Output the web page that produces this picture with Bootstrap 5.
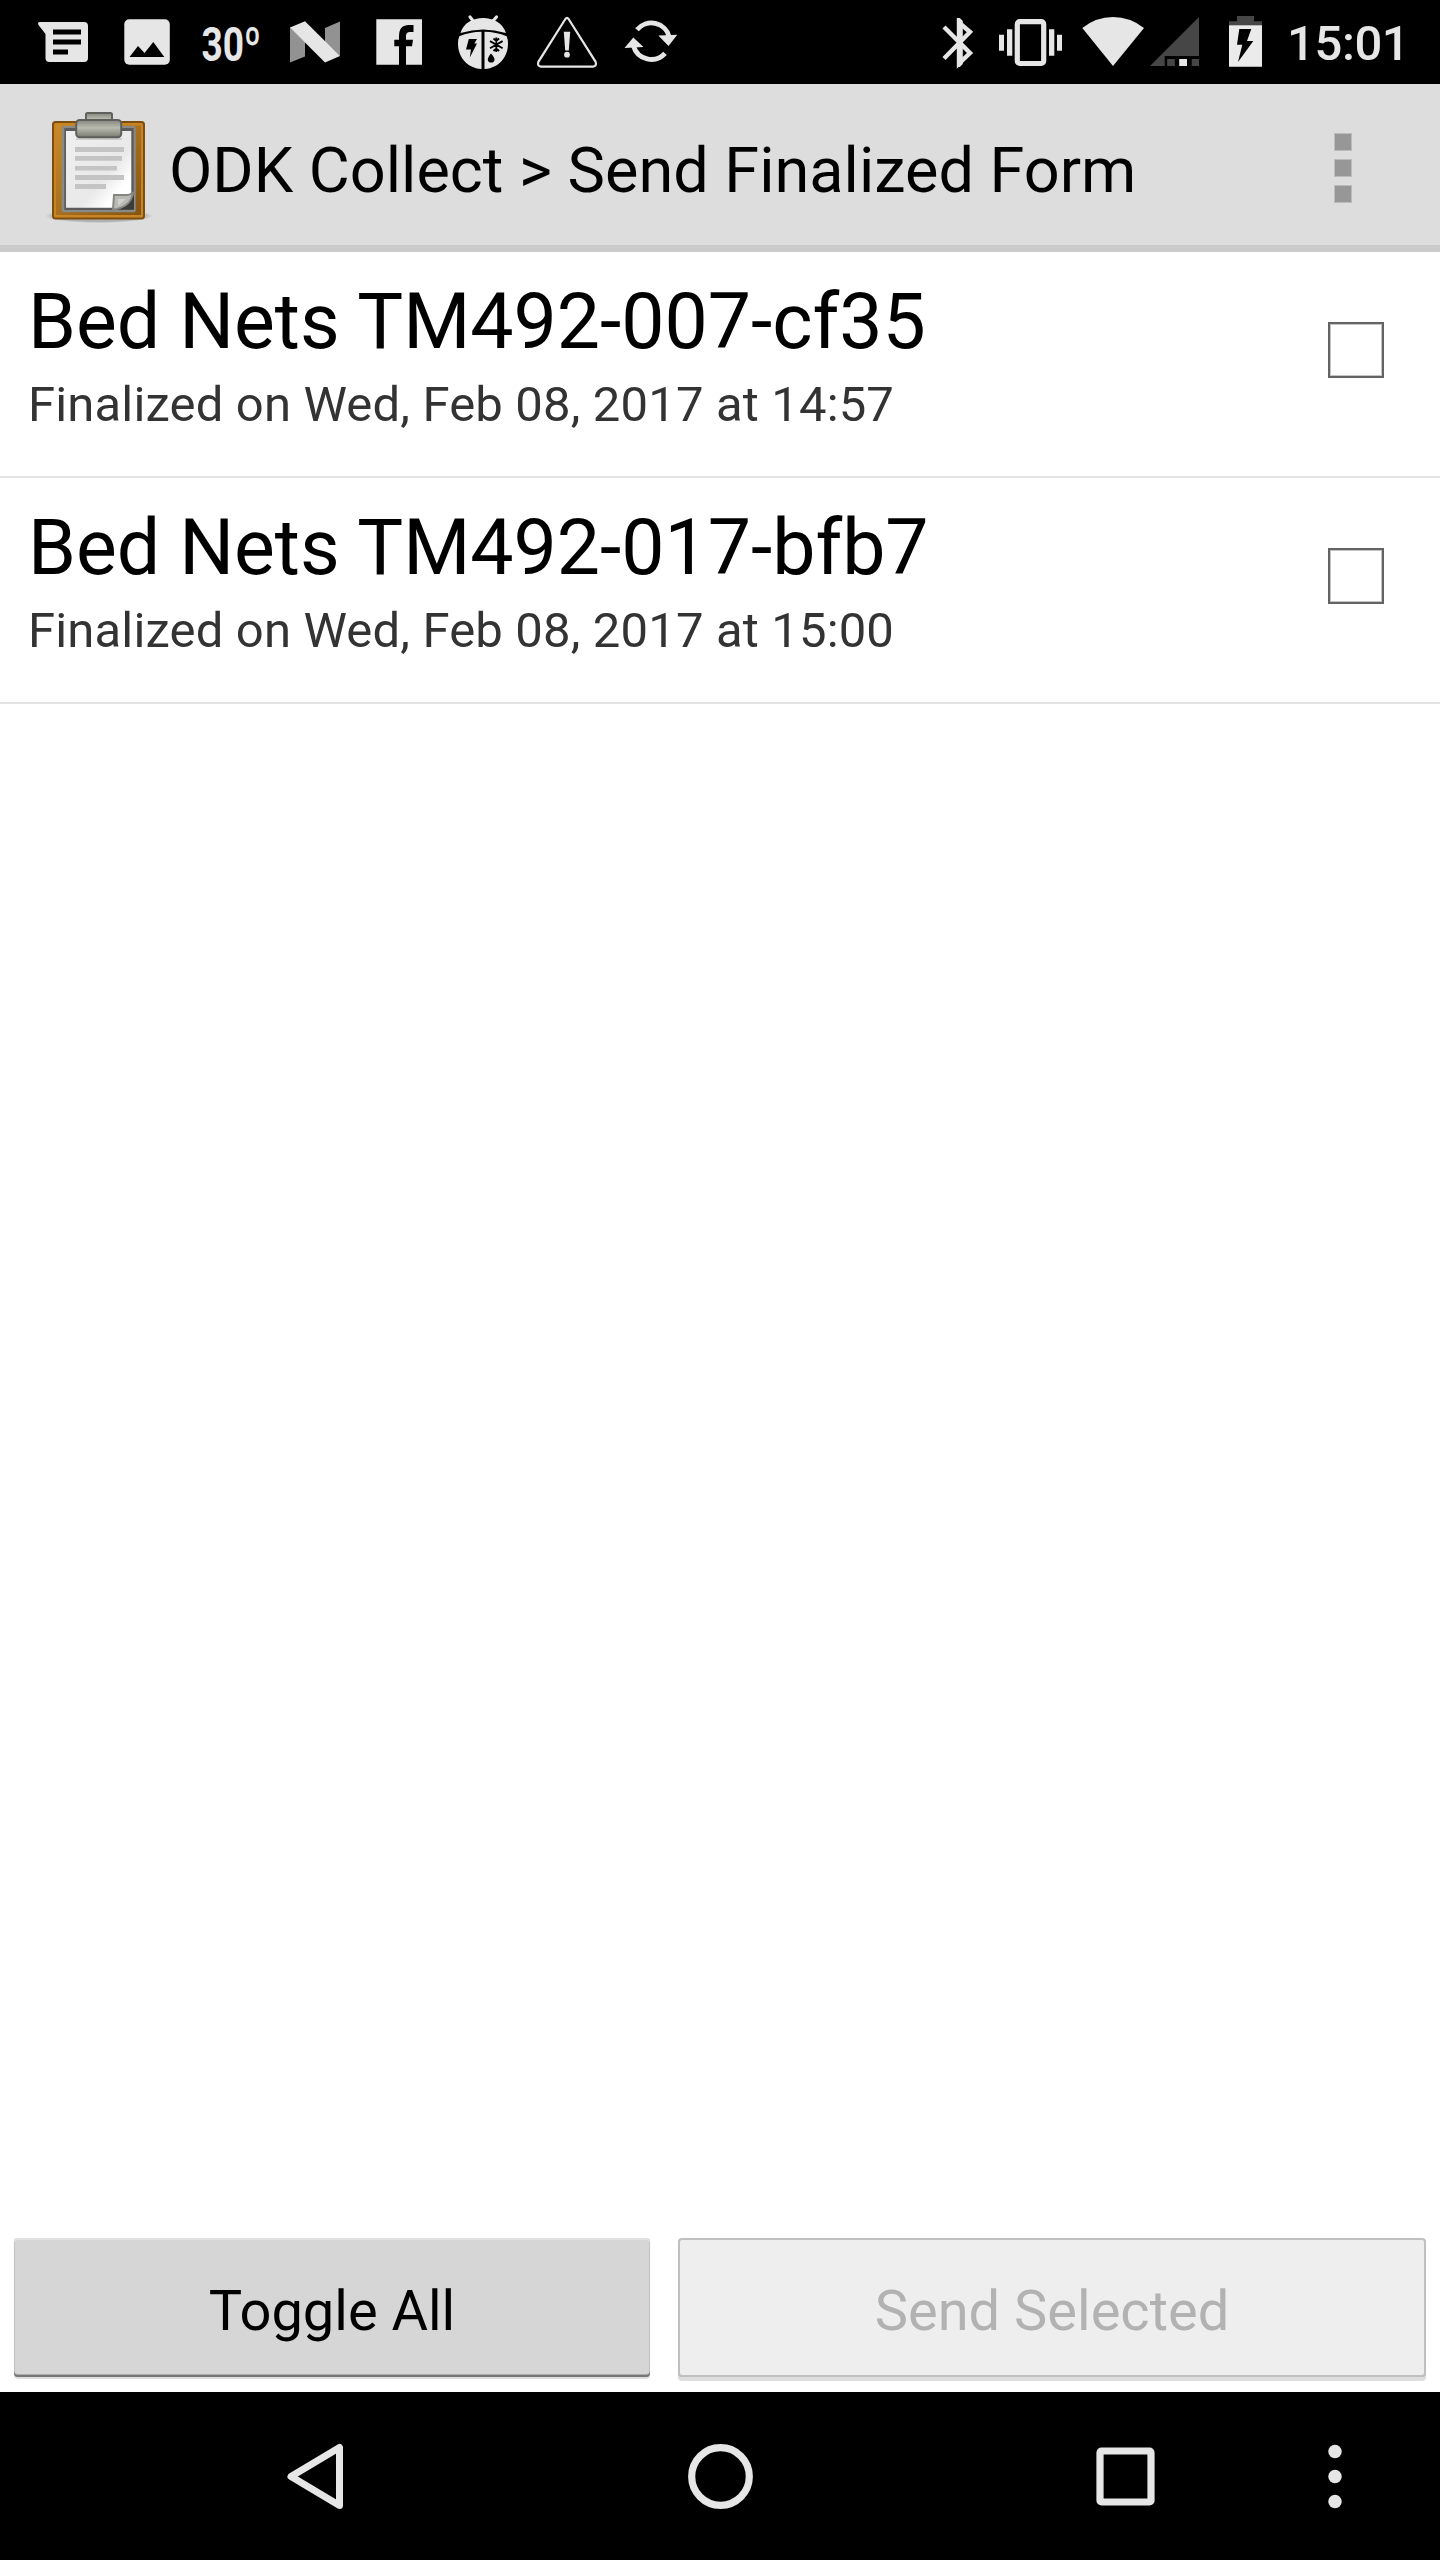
<!DOCTYPE html>
<html lang="en">
<head>
<meta charset="utf-8">
<meta name="viewport" content="width=device-width, initial-scale=1">
<title>ODK Collect</title>
<link href="https://cdn.jsdelivr.net/npm/bootstrap@5.3.0/dist/css/bootstrap.min.css" rel="stylesheet">
<style>
  body { font-family: Roboto, "Liberation Sans", sans-serif; color: #000; background: #fff; overflow: hidden; }
  svg { display: block; flex: none; overflow: visible; }
  .phone { width: 1440px; height: 2560px; }
  .status-bar { height: 84px; background: #000; color: #e6e6e6; padding-left: 24px; }
  .clock { font-size: 49px; font-weight: 500; line-height: 84px; padding-top: 2px; height: 84px; width: 153px; margin-left: -4px; letter-spacing: -.4px; }
  .app-bar { height: 168px; background: #ddd; border-bottom: 7px solid #cbcbcb; padding-left: 40px; padding-right: 88px; }
  .app-title { font-size: 63px; line-height: 74px; margin-left: 19px; padding-top: 12px; }
  .overflow-dots { gap: 8.6px; padding-top: 7px; }
  .overflow-dots i { width: 18px; height: 17.6px; background: #979797; border: .5px solid #bbb; }
  .list-group-flush > .form-row { height: 226px; padding: 20px 56px 0 28px; border: 0 solid #e3e3e3; border-bottom-width: 2px !important; border-radius: 0; color: #000; }
  .form-name { font-size: 77px; line-height: 90px; margin-top: 5px; letter-spacing: -.04px; }
  .form-date { font-size: 49px; line-height: 58px; color: #333; margin-top: 9px; letter-spacing: .16px; }
  .form-check-input.pick { width: 56px; height: 56px; margin: 50px 0 0; border: 2px solid #636363; border-radius: 0; box-shadow: inset 0 0 0 1px #c4c4c4; float: none; }
  .action-row { height: 154px; padding: 0 14px 15px; gap: 28px; }
  .action-row .btn { font-size: 56px; line-height: 66px; height: 139px; border-radius: 4px; padding: 7px 0 0; color: #000; border: 0; }
  .btn-toggle { width: 636px; background: #d6d6d6 !important; box-shadow: inset 0 2px 0 #e2e2e2, inset 0 -2px 0 #777, inset 0 -3px 0 #aaa, inset 1px 0 0 #c2c2c2, inset -1px 0 0 #c2c2c2, 0 2px 1px #ddd; }
  .action-row .btn-send { width: 748px; background: #eee; color: #b2b2b2; opacity: 1; box-shadow: inset 0 0 0 2px #c0c0c0, inset 0 -2px 0 #aeaeae, 0 4px 0 #dedede; }
  .nav-bar { height: 168px; background: #000; padding-left: 255px; }
</style>
</head>
<body>
<div class="phone d-flex flex-column">

  <header class="status-bar d-flex align-items-start flex-shrink-0">
    <svg width="81" height="84" viewBox="24 0 81 84"><path fill="#e6e6e6" d="M40 22H84Q88 22 88 26V58Q88 62 84 62H49.500Q45.500 62 45.500 58V34L38.500 25Q37 22 40 22Z"/><path fill="#000" d="M53 29.500h28v5H53zM53 39.500h28v5H53zM53 49.500h15v5H53z"/></svg>
    <svg width="85" height="84" viewBox="105 0 85 84"><rect x="124.300" y="19.200" width="45.500" height="45.500" rx="5" fill="#e6e6e6"/><path d="M129.500 57 138 46l6.500 7L153.300 42 164.300 57z"/></svg>
    <svg width="85" height="84" viewBox="190 0 85 84"><text x="201.500" y="61" font-size="48" font-weight="700" fill="#e6e6e6" textLength="59.500" lengthAdjust="spacingAndGlyphs">30º</text></svg>
    <svg width="80" height="84" viewBox="275 0 80 84"><path fill="#929292" d="M290 27 305 42V56.500L290 62.500zM325 28 340 21.500V56L325 42z"/><path fill="#e6e6e6" d="M290 27.500 305 21.300 340 56 325 62.600z"/></svg>
    <svg width="85" height="84" viewBox="355 0 85 84"><path fill="#e6e6e6" d="M376.300 19.200H422V64.800H376.300z"/><path d="M399 65V46.300H394.300V39.700H399V36Q399 25 409 25H413.500V32H410Q406 32 406 36V39.700H413L412 46.300H406V65z"/></svg>
    <svg width="85" height="84" viewBox="440 0 85 84"><path d="M470 17 474 22M496.500 17 492 22" stroke="#e6e6e6" stroke-width="3.200" stroke-linecap="round"/><path fill="#e6e6e6" d="M460.500 33C466 13 500 13 506 33Q483 26 460.500 33zM481.500 31.800V69C466 68 458 56 458 43.500Q458 39.500 459.300 36.300 470 32 481.500 31.800zM484.500 31.800V69C500 68 508 56 508 43.500Q508 39.500 506.700 36.300 496 32 484.500 31.800z"/><path d="M468.800 39H477L474.300 43.500H477L469.800 57.500 471 49.500H466z"/><path d="M496.300 37.500v14.400M490 41.100l12.600 7.200M502.600 41.100 490 48.300M493.500 38.500l2.800 2.500 2.800-2.500M493.500 51l2.800-2.500 2.800 2.500" stroke="#000" stroke-width="1.800" fill="none"/><path d="M491 53.500Q494.500 57.500 494.500 59.200A3.300 3.300 0 0 1 487.800 59.200Q487.800 57.500 491 53.500z"/></svg>
    <svg width="85" height="84" viewBox="525 0 85 84"><path d="M565.400 19Q567 16.800 568.600 19L595.600 61.800Q597 66.400 593 66.600H541Q537 66.400 538.400 61.800z" fill="none" stroke="#e6e6e6" stroke-width="2.200"/><path fill="#e6e6e6" d="M563.800 31.800h6.400l-1.400 18.800h-3.600z"/><circle cx="567" cy="54.700" r="2.900" fill="#e6e6e6"/></svg>
    <svg width="80" height="84" viewBox="610 0 80 84"><path d="M637 29.800A18.500 18.500 0 0 1 669.300 37M665 53.300A18.500 18.500 0 0 1 633.500 46" fill="none" stroke="#e6e6e6" stroke-width="4.800"/><path fill="#e6e6e6" d="M658.300 35.500 677.300 34.800 668.500 46zM624.500 48 633.300 37.500 643.500 47z"/></svg>

    <svg class="ms-auto" width="55" height="84" viewBox="930 0 55 84"><path d="M944 27 970 53 959 63.500V22.500L970 32 944 58.500" fill="none" stroke="#e6e6e6" stroke-width="4.400"/><path fill="#e6e6e6" d="M957 18h2.800l3 3v43l-3 3H957z"/></svg>
    <svg width="85" height="84" viewBox="985 0 85 84"><rect x="1017.300" y="21.700" width="26.400" height="41.800" rx="2.500" fill="none" stroke="#e6e6e6" stroke-width="5.200"/><path fill="#e6e6e6" d="M1007 29.300h5.300v26.400h-5.300zM999 34.700h5v16h-5zM1049 29.300h5.300v26.400h-5.300zM1057 34.700h5v16h-5z"/></svg>
    <svg width="80" height="84" viewBox="1070 0 80 84"><path fill="#e6e6e6" d="M1082.300 28Q1096 17 1113 17T1144 28L1113 66z"/></svg>
    <svg width="60" height="84" viewBox="1150 0 60 84"><path fill="#464646" d="M1150 66 1199 17V56H1164.700V66zM1167.200 59h7.600v7h-7.600zM1191.700 59h7.300v7h-7.300z"/><path fill="#e6e6e6" d="M1179.200 59h7.800v7h-7.800z"/></svg>
    <svg width="81" height="84" viewBox="1210 0 81 84"><path fill="#464646" d="M1237 16h17v5.300h8v4.200h-33v-4.200h8z"/><path fill="#ebebeb" d="M1229 25.300h33v41.500h-33z"/><path d="M1239.300 29H1251.300L1247 41H1253.300L1238 62 1242.300 44.700H1237z"/></svg>
    <span class="clock flex-shrink-0">15:01</span>
  </header>

  <nav class="app-bar d-flex align-items-center flex-shrink-0">
    <svg width="110" height="130" viewBox="40 100 110 130">
      <defs>
        <linearGradient id="board" x1="0" y1="0" x2="1" y2="1"><stop offset="0" stop-color="#c98a2b"/><stop offset="1" stop-color="#855412"/></linearGradient>
        <linearGradient id="sheet" x1="0" y1="0" x2="1" y2="1"><stop offset="0" stop-color="#efefef"/><stop offset=".6" stop-color="#e9e9e9"/><stop offset=".8" stop-color="#fff"/></linearGradient>
        <linearGradient id="clip" x1="0" y1="0" x2="0" y2="1"><stop offset="0" stop-color="#85857d"/><stop offset=".45" stop-color="#b9bbb0"/><stop offset="1" stop-color="#78796f"/></linearGradient>
        <radialGradient id="shade"><stop offset=".8" stop-color="#000" stop-opacity=".2"/><stop offset="1" stop-color="#000" stop-opacity="0"/></radialGradient>
      </defs>
      <ellipse cx="99" cy="216" rx="54" ry="7" fill="url(#shade)"/>
      <rect x="53" y="122" width="91" height="96.500" rx="2.500" fill="#c98524" stroke="#7c4f10" stroke-width="2"/>
      <rect x="56" y="125.500" width="85" height="89.500" fill="url(#board)"/>
      <rect x="61.700" y="126" width="74" height="86.300" rx="2" fill="#888a85"/>
      <rect x="64.300" y="128" width="69.400" height="82" fill="#5b5b5b"/>
      <path fill="url(#sheet)" d="M66 131h65.300v63L113 207.700H66z"/>
      <path fill="#c4c4c4" d="M75 147h49v5H75zM75 156h47v4.800H75zM75 166h42v4.400H75zM75 175h49v5H75zM75 184h31v5H75z"/>
      <path fill="#3c3c3c" d="M118 209.500 134 196V209.500z"/><path fill="#b9bab5" stroke="#858780" stroke-width="2" d="M114 195H126Q131 195 133 192 132 201 126 205T113 209.500z"/><path fill="#d0d1ce" d="M118 199H126L118 206z"/>
      <path fill="#000" fill-opacity=".12" d="M76 138h46v2H76z"/>
      <rect x="86" y="113" width="26" height="14" rx="1.500" fill="url(#clip)" stroke="#5f605c" stroke-width="2"/>
      <rect x="76.200" y="120" width="45" height="17.300" rx="3.500" fill="url(#clip)" stroke="#5f605c" stroke-width="2"/>
    </svg>
    <div class="app-title text-nowrap">ODK Collect &gt; Send Finalized Form</div>
    <div class="overflow-dots d-flex flex-column ms-auto"><i></i><i></i><i></i></div>
  </nav>

  <main class="list-group list-group-flush flex-grow-1">
    <label class="list-group-item form-row d-flex justify-content-between align-items-start">
      <div><div class="form-name text-nowrap">Bed Nets TM492-007-cf35</div><div class="form-date text-nowrap">Finalized on Wed, Feb 08, 2017 at 14:57</div></div>
      <input class="form-check-input pick" type="checkbox">
    </label>
    <label class="list-group-item form-row d-flex justify-content-between align-items-start">
      <div><div class="form-name text-nowrap">Bed Nets TM492-017-bfb7</div><div class="form-date text-nowrap">Finalized on Wed, Feb 08, 2017 at 15:00</div></div>
      <input class="form-check-input pick" type="checkbox">
    </label>
  </main>

  <div class="action-row d-flex flex-shrink-0">
    <button class="btn btn-toggle" type="button">Toggle All</button>
    <button class="btn btn-send" type="button" disabled>Send Selected</button>
  </div>

  <footer class="nav-bar d-flex flex-shrink-0">
    <svg width="345" height="168" viewBox="255 2392 345 168"><path d="M291 2476.500 339.500 2447.500V2505.500z" fill="none" stroke="#e6e6e6" stroke-width="7" stroke-linejoin="round"/></svg>
    <svg width="400" height="168" viewBox="600 2392 400 168"><circle cx="720.500" cy="2476.500" r="28.800" fill="none" stroke="#e6e6e6" stroke-width="7.200"/></svg>
    <svg width="250" height="168" viewBox="1000 2392 250 168"><rect x="1100" y="2451" width="51" height="51" rx="1.500" fill="none" stroke="#e6e6e6" stroke-width="7.200"/></svg>
    <svg width="190" height="168" viewBox="1250 2392 190 168" fill="#e6e6e6"><circle cx="1335" cy="2451.500" r="6.700"/><circle cx="1335" cy="2476.500" r="6.700"/><circle cx="1335" cy="2501.500" r="6.700"/></svg>
  </footer>
</div>
<script src="https://cdn.jsdelivr.net/npm/bootstrap@5.3.0/dist/js/bootstrap.bundle.min.js"></script>
</body>
</html>
